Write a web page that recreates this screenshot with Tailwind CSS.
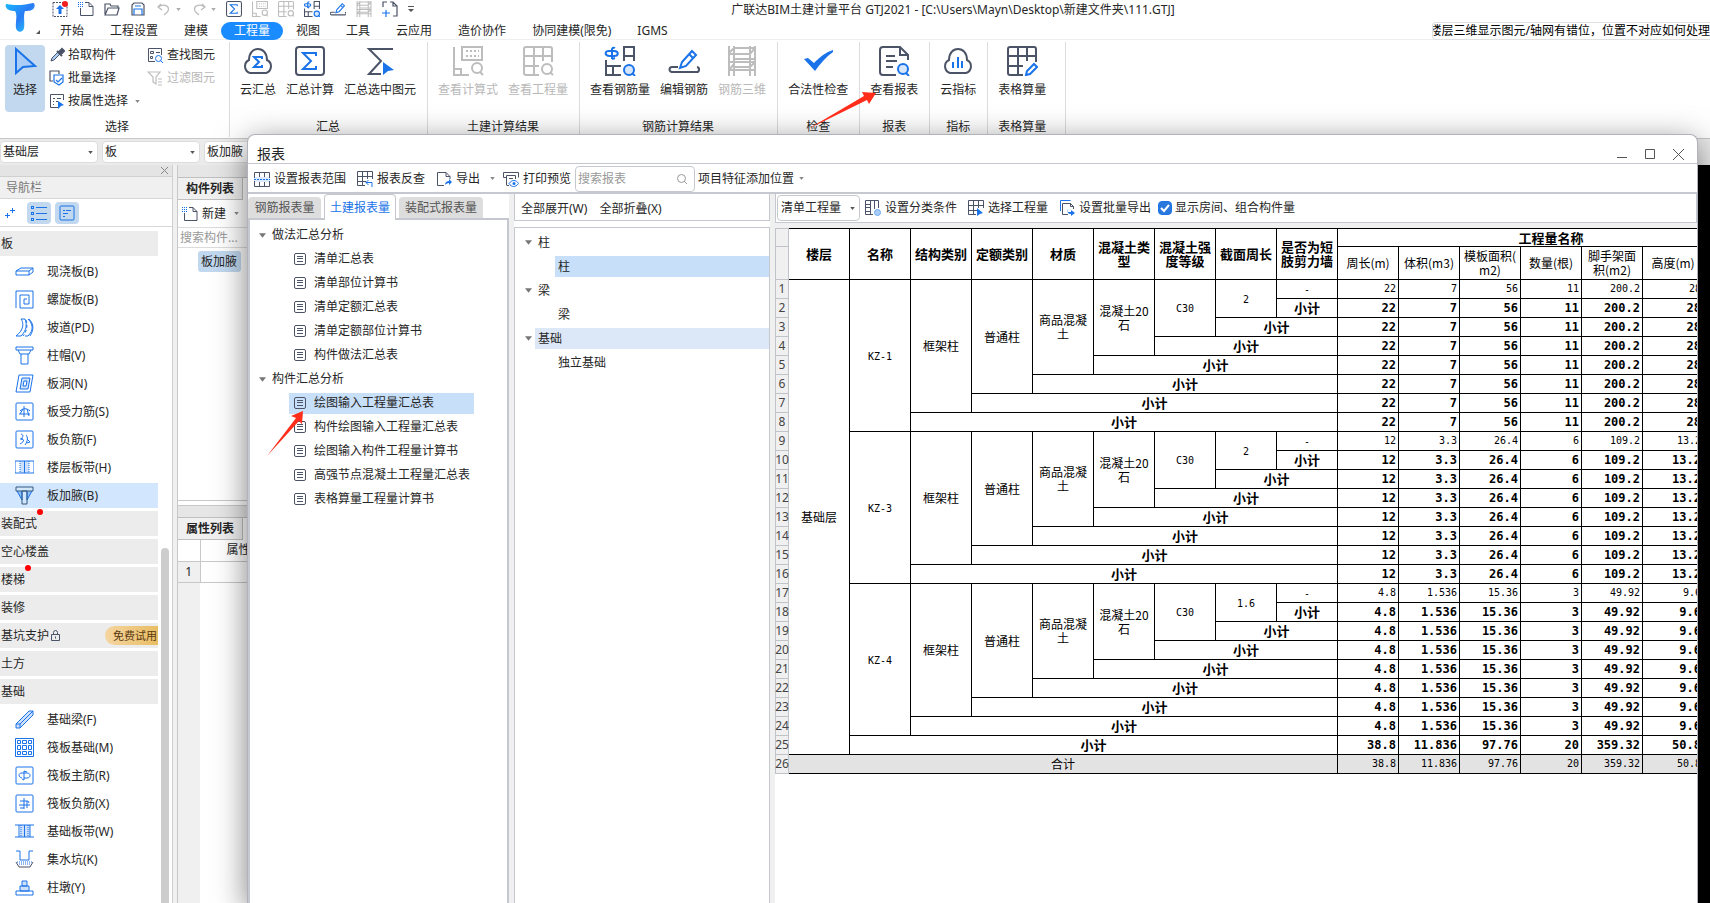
<!DOCTYPE html>
<html lang="zh-CN">
<head>
    <meta charset="UTF-8">
    <meta name="viewport" content="width=device-width, initial-scale=1.0">
    <title>广联达BIM土建计量平台 GTJ2021</title>
    <script src="https://cdn.jsdelivr.net/npm/@tailwindcss/browser@4"></script>
</head>
<body class="relative h-screen overflow-hidden bg-white font-['Noto_Sans','Noto_Sans_CJK_SC',sans-serif] text-[12px] leading-5 text-[#262626]">

    <!-- Iconos -->
    <svg class="absolute size-0">
        <defs>
            <linearGradient id="logoG" x1="0" y1="0" x2="1" y2="1">
                <stop offset="0" stop-color="#16b9ff"/><stop offset="0.5" stop-color="#2b7bf5"/><stop offset="1" stop-color="#22d3fb"/>
            </linearGradient>
        </defs>
        <symbol id="caret" viewBox="0 0 6 4"><path d="M0 0h6L3 4z" fill="currentColor"/></symbol>
        <symbol id="sum" viewBox="0 0 30 30" fill="none" stroke-width="2"><rect x="1" y="1" width="28" height="28" rx="3" stroke="#4b5366"/><path d="M21 10V7H8l8 8-8 8h13v-3" stroke="#1a73e8"/></symbol>
        <symbol id="cloudsum" viewBox="0 0 32 30" fill="none" stroke-width="2"><path d="M8 27a7 7 0 0 1-1-13C7 7 11 3 16 3s9 4 9 11a7 7 0 0 1-1 13z" stroke="#4b5366"/><path d="M20 13v-2h-8l5 5-5 5h8v-2" stroke="#1a73e8"/></symbol>
        <symbol id="sumsel" viewBox="0 0 30 30"><path d="M28 3H4l12 12L4 28h12" fill="none" stroke="#4b5366" stroke-width="2"/><path d="M18 16l11 8-6 1-5 4z" fill="#1a73e8"/></symbol>
        <symbol id="calc" viewBox="0 0 30 30" fill="none" stroke="#bdbdbd" stroke-width="2"><path d="M1 1v28h15M1 23h7v6M9 1h20v13H9z"/><path d="M13 5h13M13 10h13" stroke-dasharray="2 2"/><circle cx="24" cy="22" r="5"/><path d="M27 26l3 3"/></symbol>
        <symbol id="grid" viewBox="0 0 30 30" fill="none" stroke="#bdbdbd" stroke-width="2"><path d="M16 29H3a2 2 0 0 1-2-2V3a2 2 0 0 1 2-2h24a2 2 0 0 1 2 2v13M1 10h28M1 20h15M11 1v28M20 1v14"/><circle cx="24" cy="23" r="5"/><path d="M27 26l3 3"/></symbol>
        <symbol id="rebar" viewBox="0 0 30 30" fill="none" stroke-width="2"><path d="M19 15V1h10v14M19 10h10M1 14v15h15M1 20h15M8 20v9" stroke="#4b5366"/><g stroke="#1a73e8"><path d="M7 13V3a2 2 0 0 1 3-1M4 10c-5-1-4-5 0-5h5c5 0 5 5 0 5H4M7 13l3-1"/><circle cx="24" cy="24" r="5" fill="#d6e6fb"/><path d="M27 27l3 3"/></g></symbol>
        <symbol id="edit" viewBox="0 0 30 30" fill="none" stroke-width="2"><path d="M9 21H3a2 2 0 0 0 0 5h24a2 2 0 0 0 1-5" stroke="#4b5366"/><path d="M11 22l2-6L23 5l4 4-10 11zM20 8l4 4" stroke="#1a73e8"/></symbol>
        <symbol id="cage" viewBox="0 0 30 30" fill="none" stroke="#bdbdbd" stroke-width="2"><path d="M2 0v30M7 0v30M23 0v30M28 0v30M2 7L7 2h21M2 8h21l5-6M2 16h26M7 13h21M2 24h26M7 21h16l5-5M2 24l5-6"/></symbol>
        <symbol id="check" viewBox="0 0 30 30"><path d="M1 13l4-1 6 5C17 11 23 6 30 4v2C23 11 17 18 12 25z" fill="#1a73e8"/></symbol>
        <symbol id="report" viewBox="0 0 30 30" fill="none" stroke-width="2"><path d="M17 29H4a3 3 0 0 1-3-3V4a3 3 0 0 1 3-3h17l8 8v5M21 1v8h8M7 10h9M7 15h11M7 21h7" stroke="#4b5366"/><g stroke="#1a73e8"><circle cx="24" cy="23" r="5" fill="#d6e6fb"/><path d="M27 27l3 3"/></g></symbol>
        <symbol id="cloudbar" viewBox="0 0 32 30" fill="none" stroke-width="2"><path d="M8 27a7 7 0 0 1-1-13C7 7 11 3 16 3s9 4 9 11a7 7 0 0 1-1 13z" stroke="#4b5366"/><path d="M11 22v-6M16 22V11M20 22v-7" stroke="#1a73e8"/></symbol>
        <symbol id="tablepen" viewBox="0 0 30 30" fill="none" stroke-width="2"><path d="M16 29H3a2 2 0 0 1-2-2V3a2 2 0 0 1 2-2h24a2 2 0 0 1 2 2v13M1 10h28M1 20h15M11 1v28M20 1v14" stroke="#4b5366"/><path d="M19 29l1-4 7-7 3 3-7 7z" stroke="#1a73e8"/></symbol>
        <symbol id="cursor" viewBox="0 0 30 30"><path d="M6 3v24l7-6 12-1z" fill="#a9cdf7" stroke="#1a73e8" stroke-width="2"/></symbol>
        <symbol id="newdoc" viewBox="0 0 16 16" fill="none"><path d="M7 1.500h4l4 4v9H2.500V7M11 1.500v4h4" stroke="#4b5366"/><path d="M0 1.500h5M0 3.500h5M0 5.500h5" stroke="#1a73e8" stroke-dasharray="1 1"/></symbol>
        <symbol id="doc" viewBox="0 0 12 12" fill="none" stroke="#4b5366"><rect x="0.5" y="0.5" width="11" height="11" rx="1.5"/><path d="M3 3.500h6M3 5.500h6M3 8.500h6"/></symbol>
        <symbol id="tgrid" viewBox="0 0 16 16" fill="none" stroke="#4b5366"><path d="M8 14.500H.5V.5h15V8M.5 5.500h15M.5 10.500H9M5.500.5V15M10.500.5V8"/></symbol>
    </svg>

    <div class="flex h-full flex-col">
        <!-- Cabecera -->
        <header class="flex h-10 shrink-0 border-b border-[#efefef]">
            <div class="relative w-[47px] shrink-0">
                <svg class="ml-[5px] mt-[3px] h-[29px] w-[30px]" viewBox="0 0 30 29"><path d="M2 1C10 3 20 2 28 0c2 0 2 3 1 5-2 3-6 3-9 3-2 5 0 12-1 17-1 5-7 5-8 0-1-6 2-12-1-17C6 8 2 7 1 4 0 2 1 1 2 1z" fill="url(#logoG)"/></svg>
                <svg class="absolute bottom-[5px] right-[7px] size-1" viewBox="0 0 4 4"><path d="M4 0v4H0z" fill="#555"/></svg>
            </div>
            <div class="min-w-0 flex-1">
                <div class="flex h-[22px] items-start">
                    <div class="ml-[5px] flex gap-[10px] pt-px text-[#555]">
                        <button aria-label="上传"><svg class="size-4" viewBox="0 0 16 16" fill="none"><rect x="1" y="1.5" width="14" height="14" stroke="#4b5366" stroke-dasharray="2 1"/><path d="M8 4l4 4H9.500v5h-3V8H4z" fill="#1a73e8"/><circle cx="13" cy="3" r="3" fill="#f02020"/></svg></button>
                        <button aria-label="新建"><svg class="size-4"><use href="#newdoc"/></svg></button>
                        <button aria-label="打开"><svg class="size-4" viewBox="0 0 16 16" fill="none" stroke="#4b5366" stroke-width="1.2"><path d="M1 13V3h5l1 2h7v2M1 14l3-7h11l-2 7z"/></svg></button>
                        <button aria-label="保存"><svg class="size-4" viewBox="0 0 16 16" fill="none" stroke-width="1.2"><path d="M2 14V4l2-2h8l2 2v10z" stroke="#4b5366"/><path d="M4 14V8h8v6M5 5h6" stroke="#1a73e8"/></svg></button>
                        <button aria-label="撤销" class="flex w-[25px] items-center gap-1 text-[#aaa]"><svg class="size-4" viewBox="0 0 16 16" fill="none" stroke="#bbb" stroke-width="1.3"><path d="M5 3L2 6l4 3M2 6c6-4 12-1 10 4-1 2-3 3-4 4"/></svg><svg class="h-[3px] w-[5px]"><use href="#caret"/></svg></button>
                        <button aria-label="重做" class="flex w-[25px] items-center gap-1 text-[#aaa]"><svg class="size-4" viewBox="0 0 16 16" fill="none" stroke="#bbb" stroke-width="1.3"><path d="M11 3l3 3-4 3M14 6C8 2 2 5 4 10c1 2 3 3 4 4"/></svg><svg class="h-[3px] w-[5px]"><use href="#caret"/></svg></button>
                        <button aria-label="汇总计算"><svg class="size-4"><use href="#sum"/></svg></button>
                        <button aria-label="查看计算式"><svg class="size-4"><use href="#calc"/></svg></button>
                        <button aria-label="查看工程量"><svg class="size-4"><use href="#grid"/></svg></button>
                        <button aria-label="查看钢筋量"><svg class="size-4"><use href="#rebar"/></svg></button>
                        <button aria-label="编辑钢筋"><svg class="size-4"><use href="#edit"/></svg></button>
                        <button aria-label="钢筋三维"><svg class="size-4"><use href="#cage"/></svg></button>
                        <button aria-label="添加"><svg class="size-4" viewBox="0 0 16 16" fill="none" stroke-width="1.2"><path d="M1 6V1h4M8 1h3l4 4v10h-4M11 1v4h4" stroke="#4b5366"/><path d="M4 9v7M0 12h8" stroke="#1a73e8"/></svg></button>
                        <button aria-label="更多" class="flex items-center"><svg class="h-[7px] w-[6px]" viewBox="0 0 6 7"><path d="M0 0h6v1H0zM0 3h6L3 6z" fill="#555"/></svg></button>
                    </div>
                    <h1 class="min-w-0 flex-1 truncate pr-[218px] text-center">广联达BIM土建计量平台 GTJ2021 - [C:\Users\Mayn\Desktop\新建文件夹\111.GTJ]</h1>
                </div>
                <nav class="flex h-[18px] items-center leading-[18px]">
                    <a href="#" class="px-[13px]">开始</a>
                    <a href="#" class="px-[13px]">工程设置</a>
                    <a href="#" class="px-[13px]">建模</a>
                    <a href="#" class="rounded-full bg-[#1a8cff] px-[13px] text-white">工程量</a>
                    <a href="#" class="px-[13px]">视图</a>
                    <a href="#" class="px-[13px]">工具</a>
                    <a href="#" class="px-[13px]">云应用</a>
                    <a href="#" class="px-[13px]">造价协作</a>
                    <a href="#" class="px-[13px]">协同建模(限免)</a>
                    <a href="#" class="px-[13px]">IGMS</a>
                    <div class="ml-auto flex w-[278px] justify-end overflow-hidden whitespace-nowrap rounded-l-sm border border-r-0 border-[#e0e0e0] leading-4 text-black">楼层三维显示图元/轴网有错位，位置不对应如何处理</div>
                </nav>
            </div>
        </header>

        <!-- Cinta -->
        <section class="flex h-[99px] shrink-0 border-b border-[#c8c8c8] pb-px pt-0.5">
            <div class="flex w-[230px] flex-col border-r border-[#dcdcdc] pl-[5px] pt-[3px]">
                <div class="flex">
                    <button class="flex h-[67px] w-10 flex-col items-center rounded-sm bg-[#c1d8ef] pt-px"><svg class="size-[30px]"><use href="#cursor"/></svg><span class="mt-1">选择</span></button>
                    <div class="ml-1 flex w-[98px] flex-col gap-[3px]">
                        <button class="flex h-5 items-center gap-[3px]"><svg class="size-4" viewBox="0 0 16 16"><path d="M2 14l1-3 6-6 2 2-6 6z" fill="#a9cdf7" stroke="#4b5366"/><path d="M8 4l5 5M10 5l3-3 2 2-3 3z" stroke="#4b5366" stroke-width="2" fill="#4b5366"/></svg>拾取构件</button>
                        <button class="flex h-5 items-center gap-[3px]"><svg class="size-4" viewBox="0 0 16 16" fill="none" stroke-width="1.2"><path d="M4 11H1V1h9v3" stroke="#4b5366"/><path d="M5 5h9v7l-4 3-5-3z" stroke="#1a73e8"/><path d="M7 10l2 2 4-4" stroke="#1a73e8"/></svg>批量选择</button>
                        <button class="flex h-5 items-center gap-[3px] whitespace-nowrap"><svg class="size-4 shrink-0" viewBox="0 0 16 16" fill="none"><path d="M9 14.500H1.500v-13h13V7M4 5.500h2M8 5.500h4M4 8.500h1M7 8.500h2M4 11.500h1" stroke="#4b5366"/><path d="M9 8l6 4-3 1-3 3z" fill="#1a73e8"/></svg>按属性选择<svg class="ml-1 h-[3px] w-[5px] shrink-0 text-[#888]"><use href="#caret"/></svg></button>
                    </div>
                    <div class="flex flex-col gap-[3px]">
                        <button class="flex h-5 items-center gap-1"><svg class="size-4" viewBox="0 0 16 16" fill="none"><path d="M8 14.500H1.500v-13h13V8M3.500 4.500h3v2h-3zM9 5.500h4M3.500 9.500h2v2h-2z" stroke="#4b5366"/><circle cx="11.500" cy="11.500" r="3" stroke="#1a73e8"/><path d="M13.500 13.500L16 16" stroke="#1a73e8"/></svg>查找图元</button>
                        <button disabled class="flex h-5 items-center gap-1 text-[#b8b8b8]"><svg class="size-4" viewBox="0 0 16 16" fill="none" stroke="#bdbdbd" stroke-width="1.2"><path d="M1 2h12L9 7v7l-3-2V7zM11 9h4M11 12h4M11 15h4"/></svg>过滤图元</button>
                    </div>
                </div>
                <div class="mt-auto text-center">选择</div>
            </div>
            <div id="ribbon" class="flex"></div>
        </section>

        <!-- Selectores -->
        <section class="flex h-[26px] shrink-0 gap-1 bg-[#ebebeb] pt-0.5">
            <div class="relative flex h-[22px] w-[98px] items-center rounded border border-[#dcdcdc] bg-white">
                <select aria-label="楼层" class="w-full appearance-none pl-[2px] leading-5"><option>基础层</option></select>
                <svg class="pointer-events-none absolute right-1 h-[3px] w-[5px] text-[#555]"><use href="#caret"/></svg>
            </div>
            <div class="relative flex h-[22px] w-[98px] items-center rounded border border-[#dcdcdc] bg-white">
                <select aria-label="构件类型" class="w-full appearance-none pl-[2px] leading-5"><option>板</option></select>
                <svg class="pointer-events-none absolute right-1 h-[3px] w-[5px] text-[#555]"><use href="#caret"/></svg>
            </div>
            <div class="flex h-[22px] w-[98px] items-center rounded border border-[#dcdcdc] bg-white">
                <select aria-label="构件" class="w-full appearance-none pl-[2px] leading-5"><option>板加腋</option></select>
            </div>
        </section>

        <main class="flex min-h-0 flex-1 bg-[#f0f0f0]">
            <aside class="flex w-[173px] shrink-0 flex-col border-r border-[#cfcfcf] bg-white">
                <div class="flex h-3 items-center justify-end border-b border-[#d0d0d0] bg-[#e4e4e4] pr-1"><button aria-label="关闭"><svg class="size-[7px]" viewBox="0 0 7 7" stroke="#888"><path d="M0 0l7 7M7 0L0 7"/></svg></button></div>
                <h2 class="h-[22px] border-b border-[#d8d8d8] bg-[#f0f0f0] pl-1.5 leading-[22px] text-[#777]">导航栏</h2>
                <div class="flex h-7 items-center gap-1 border-b border-[#d8d8d8] pl-1 text-[#1a73e8]">
                    <button aria-label="添加" class="mr-1 flex size-[14px] items-center"><svg class="size-3" viewBox="0 0 12 12" stroke="currentColor"><path d="M8.500 1v5M6 3.500h5M3.500 6v5M1 8.500h5"/></svg></button>
                    <button aria-label="列表" class="ml-px flex h-[22px] w-6 items-center justify-center rounded-sm bg-[#c1d8ef]"><svg class="size-4" viewBox="0 0 16 16" fill="none" stroke="currentColor"><path d="M5 2.500h11M5 8.500h11M5 14.500h11"/><rect x="0.500" y="1.500" width="2" height="2"/><rect x="0.500" y="7.500" width="2" height="2"/><rect x="0.500" y="13.500" width="2" height="2"/></svg></button>
                    <button aria-label="详情" class="flex h-[22px] w-6 items-center justify-center rounded-sm bg-[#c1d8ef]"><svg class="size-4" viewBox="0 0 16 16" fill="none" stroke="currentColor"><rect x="1" y="1" width="14" height="14" rx="1"/><path d="M4 5.500h2M7 5.500h5M4 8.500h5M4 11.500h2"/></svg></button>
                </div>
                <div class="flex min-h-0 flex-1 overflow-hidden pt-1">
                    <ul id="nav" class="flex w-[158px] flex-col gap-[3px]"></ul>
                    <div class="ml-[3px] mt-[317px] w-2 rounded-t-full bg-[#cdcdcd]"></div>
                </div>
            </aside>

            <div class="ml-1 flex w-[120px] shrink-0 flex-col border-l border-[#c8c8c8] bg-white">
                <section class="flex h-[336px] flex-col border-b border-[#c8c8c8]">
                    <div class="h-[13px] shrink-0 border-b border-[#c0c0c0] bg-[#e6e6e6]"></div>
                    <h2 class="h-[22px] w-[65px] border-b border-r border-[#c0c0c0] bg-[#f0f0f0] text-center font-semibold leading-[22px]">构件列表</h2>
                    <button class="flex h-7 items-center gap-1 border-b border-[#dcdcdc] pl-1"><svg class="size-4"><use href="#newdoc"/></svg>新建<svg class="ml-1 h-[3px] w-[5px] text-[#888]"><use href="#caret"/></svg></button>
                    <input aria-label="搜索构件" placeholder="搜索构件..." class="h-5 border-b border-[#dcdcdc] pl-[2px] placeholder:text-[#999]">
                    <div class="ml-5 mt-[3px] w-[43px] rounded-[3px] bg-[#c1d8ef] pl-[3px] leading-[21px]">板加腋</div>
                </section>
                <section class="mt-1 flex min-h-0 flex-1 flex-col border-t border-[#c8c8c8]">
                    <div class="h-3 shrink-0 border-b border-[#c0c0c0] bg-[#e6e6e6]"></div>
                    <h2 class="h-[22px] w-[65px] shrink-0 border-b border-r border-[#c0c0c0] bg-[#f0f0f0] text-center font-semibold leading-[22px]">属性列表</h2>
                    <table class="w-full table-fixed">
                        <tr class="h-[21px] border-b border-[#c8c8c8]"><th class="w-[22px] border-r border-[#c8c8c8]"></th><th class="pl-[26px] text-left font-normal">属性名称</th></tr>
                        <tr class="h-[21px] border-b border-[#c8c8c8]"><td class="border-r border-[#c8c8c8] bg-[#f0f0f0] text-center">1</td><td></td></tr>
                    </table>
                    <div class="w-[22px] flex-1 bg-[#f0f0f0]"></div>
                </section>
            </div>
            <div class="flex-1 bg-black"></div>
        </main>
    </div>

    <!-- Ventana de informes -->
    <div class="absolute bottom-0 left-[247px] right-[12px] top-[134px] flex flex-col overflow-hidden rounded-t-lg border border-b-0 border-[#b0b4ba] bg-white shadow-[0_8px_32px_rgba(0,0,0,0.5)]">
        <div class="flex h-7 shrink-0 items-center pl-[9px] pr-[13px] pt-2.5">
            <h2 class="text-[14px]">报表</h2>
            <div class="ml-auto flex items-center gap-[18px] text-[#555]">
                <button aria-label="最小化"><svg class="block size-[10px]" viewBox="0 0 10 10" stroke="currentColor"><path d="M0 8.500h10"/></svg></button>
                <button aria-label="最大化"><svg class="block size-[10px]" viewBox="0 0 10 10" fill="none" stroke="currentColor"><path d="M.5.5h9v9h-9z"/></svg></button>
                <button aria-label="关闭"><svg class="block size-[11px]" viewBox="0 0 11 11" fill="none" stroke="currentColor"><path d="M0 0l11 11M11 0L0 11"/></svg></button>
            </div>
        </div>
        <div class="flex h-[31px] shrink-0 items-center whitespace-nowrap border-b-2 border-t border-[#c5c9cf] pl-1.5 pt-px">
            <button class="flex items-center gap-1"><svg class="size-4" viewBox="0 0 16 16" fill="none"><path d="M.5 7V1.500h15V7M5.500 1v5M10.500 1v5M.5 10v5.500h15V10M5.500 11v4M10.500 11v4" stroke="#4b5366"/><path d="M0 8.500h16" stroke="#1a73e8" stroke-dasharray="2 1"/><path d="M0 6h16v5H0z" fill="#1a73e8" fill-opacity=".15"/></svg>设置报表范围</button>
            <button class="ml-[11px] flex items-center gap-1"><svg class="size-4"><use href="#tgrid"/><path d="M9 11.500h6V16M11.500 9L9 11.500l2.500 2.500" fill="none" stroke="#1a73e8"/></svg>报表反查</button>
            <button class="ml-[11px] flex items-center gap-1"><svg class="size-4" viewBox="0 0 16 16" fill="none"><path d="M8 14.500H1.500v-13H10l4 4V8M10 1.500v4h4" stroke="#4b5366"/><path d="M9 14c0-3 2-4 4-4V8l3 3-3 3v-2c-2 0-3 1-4 2z" fill="#1a73e8"/></svg>导出<svg class="ml-1.5 h-[3px] w-[5px] text-[#888]"><use href="#caret"/></svg></button>
            <button class="ml-2 flex items-center gap-1"><svg class="size-4" viewBox="0 0 16 16" fill="none"><path d="M3 6.500H.5v-5h15v5M3.500 14V4.500h9V8M3.500 14.500H6M6 7.500h4" stroke="#4b5366"/><path d="M6 12.500c3-4 7-4 9.500 0-3 4-7 4-9.500 0z" stroke="#1a73e8"/><circle cx="11" cy="12.500" r="1.500" fill="#1a73e8"/></svg>打印预览</button>
            <div class="ml-1 flex h-[26px] w-[120px] items-center rounded border border-[#c5c9cf] pl-[2px] pr-1.5">
                <input aria-label="搜索报表" placeholder="搜索报表" class="min-w-0 flex-1 placeholder:text-[#999]">
                <svg class="size-3 shrink-0" viewBox="0 0 12 12" fill="none" stroke="#999"><circle cx="5.500" cy="5.500" r="4"/><path d="M8 8l3 3"/></svg>
            </div>
            <button class="ml-[3px] flex items-center">项目特征添加位置<svg class="ml-[5px] h-[3px] w-[5px] text-[#888]"><use href="#caret"/></svg></button>
        </div>

        <div class="flex min-h-0 flex-1 bg-[#f0f0f0]">
            <div class="flex w-[261px] shrink-0 flex-col">
                <div class="flex h-6 items-end gap-[3px] bg-white">
                    <button class="h-[21px] w-[73px] rounded-t bg-[#dddddd] text-[#555]">钢筋报表量</button>
                    <button class="z-10 -mb-[2px] h-[26px] w-[72px] rounded-t border border-b-0 border-[#c5c9cf] bg-white text-[#1a73e8]">土建报表量</button>
                    <button class="h-[21px] w-[84px] rounded-t bg-[#dddddd] text-[#555]">装配式报表量</button>
                </div>
                <ul id="reportTree" class="flex-1 border-2 border-b-0 border-[#c5c9cf] bg-white pt-[3px]"></ul>
            </div>
            <div class="ml-[5px] flex w-[256px] shrink-0 flex-col bg-white">
                <div class="mb-1.5 flex h-[27px] items-center gap-3 border border-t-0 border-[#c5c9cf] pl-1.5 pt-1">
                    <button>全部展开(W)</button><button>全部折叠(X)</button>
                </div>
                <ul id="partTree" class="flex-1 border border-b-0 border-[#c5c9cf] pt-[2px]"></ul>
            </div>
            <div class="ml-[5px] flex min-w-0 flex-1 flex-col">
                <div class="flex h-[29px] shrink-0 items-center whitespace-nowrap border border-t-0 border-[#c5c9cf] bg-white pl-px">
                    <div class="relative flex h-[26px] w-[83px] items-center rounded border border-[#c5c9cf]">
                        <select aria-label="工程量类型" class="w-full appearance-none pl-[3px] leading-5"><option>清单工程量</option></select>
                        <svg class="pointer-events-none absolute right-1 h-[3px] w-[5px] text-[#555]"><use href="#caret"/></svg>
                    </div>
                    <button class="ml-[5px] flex items-center gap-1"><svg class="size-4" viewBox="0 0 16 16" fill="none"><path d="M8 14.500H.5V.5h13V8M5.500.5v14M.5 4.500h5M.5 7.500h5M.5 11.500h5M9.500.5V9" stroke="#4b5366"/><circle cx="12.500" cy="12.500" r="3" fill="#a9cdf7" stroke="#6fa8ee"/></svg>设置分类条件</button>
                    <button class="ml-[11px] flex items-center gap-1"><svg class="size-4"><use href="#tgrid"/><path d="M9 8l6 5-3 1-3 2z" fill="#1a73e8"/></svg>选择工程量</button>
                    <button class="ml-[11px] flex items-center gap-1"><svg class="size-4" viewBox="0 0 16 16" fill="none"><path d="M1.500 11V.5h10" stroke="#1a73e8"/><path d="M9 14.500H3.500v-11h8l3 3V9M11.500 3.500v3h3" stroke="#4b5366"/><path d="M9 9v3h3v-2l4 3-4 3v-2c-3 0-4-2-3-5z" fill="#1a73e8"/></svg>设置批量导出</button>
                    <label class="ml-[7px] flex items-center gap-[3px]"><span class="relative flex"><input type="checkbox" checked class="size-[14px] appearance-none rounded-sm border border-[#1a73e8] checked:bg-[#2b78dd]"><svg class="pointer-events-none absolute inset-0 size-[14px]" viewBox="0 0 14 14" fill="none" stroke="#fff" stroke-width="2"><path d="M3 7l3 3 5-6"/></svg></span>显示房间、组合构件量</label>
                </div>
                <div class="mt-[5px] min-h-0 flex-1 overflow-hidden bg-white">
                    <table class="w-[990px] table-fixed border-separate border-spacing-0 font-['Noto_Sans_CJK_SC',sans-serif] leading-[14px] text-black">
                        <colgroup><col class="w-[14px]"><col span="16" class="w-[61px]"></colgroup>
                        <thead id="tablaHead"></thead>
                        <tbody id="tablaBody"></tbody>
                    </table>
                </div>
            </div>
        </div>
    </div>

    <!-- Flechas rojas -->
    <svg class="pointer-events-none absolute left-[800px] top-[88px] h-11 w-20" viewBox="0 0 80 44"><path d="M8 41L64 8l-2-4 14 1-7 11-2-4z" fill="#ff2d1a"/></svg>
    <svg class="pointer-events-none absolute left-[264px] top-[408px] h-[50px] w-11" viewBox="0 0 44 50"><path d="M3 48L32 10l-5-2 12-5-1 13-3-3z" fill="#ff2d1a"/></svg>

    <script>
        // Cinta: [grupo, [texto, icono, desactivado]...]
        const grupos = [
            ["汇总", ["云汇总", "cloudsum"], ["汇总计算", "sum"], ["汇总选中图元", "sumsel"]],
            ["土建计算结果", ["查看计算式", "calc", 1], ["查看工程量", "grid", 1]],
            ["钢筋计算结果", ["查看钢筋量", "rebar"], ["编辑钢筋", "edit"], ["钢筋三维", "cage", 1]],
            ["检查", ["合法性检查", "check"]],
            ["报表", ["查看报表", "report"]],
            ["指标", ["云指标", "cloudbar"]],
            ["表格算量", ["表格算量", "tablepen"]]
        ];
        document.getElementById("ribbon").innerHTML = grupos.map(([nombre, ...botones], i) => `
            <div class="flex flex-col border-r border-[#dcdcdc] pl-[10px] pt-1 ${i == 6 ? "pr-[19px]" : "pr-[11px]"}">
                <div class="flex gap-[10px]">${botones.map(([t, ico, off]) => `
                    <button ${off ? "disabled" : ""} class="flex flex-col items-center whitespace-nowrap ${off ? "text-[#b8b8b8]" : ""}"><svg class="h-[30px] w-8"><use href="#${ico}"/></svg><span class="mt-1">${t}</span></button>`).join("")}
                </div>
                <div class="mt-auto text-center">${nombre}</div>
            </div>`).join("");

        // Panel de navegación
        const marco = '<rect x="1" y="1" width="17" height="17" rx="1"/>';
        const nav = [
            ["板"],
            ["现浇板(B)", '<path d="M1 9l5-3h12v4l-4 3H1zM1 9h13v4M14 9l4-3"/>'],
            ["螺旋板(B)", '<path d="M1 18V1h17v17H5V5h9v9H9V9h3"/>'],
            ["坡道(PD)", '<path d="M6 1c3 4 3 11-5 17h5c6-6 6-12 4-17zM13 1c5 5 6 11 0 17h-3M14 1c5 5 5 11 1 17"/><path d="M11 2c2 5 1 11-3 16" stroke-dasharray="3 2"/>'],
            ["柱帽(V)", '<path d="M1 1h17v3H1zM3 4l2 4h9l2-4M6 8v10h7V8"/>'],
            ["板洞(N)", '<path d="M4 1h14l-3 17H1z"/><path d="M7 4h8l-2 11H5z" fill="#cfe1fa"/><path d="M9 7h3l-1 5H8z" fill="#fff"/>'],
            ["板受力筋(S)", marco + '<path d="M9 4v11M5 9c3-3 7-3 10 0M4 12h11M5 12l3-5M12 7l2 7"/>'],
            ["板负筋(F)", marco + '<path d="M6 4c3 1 2 3 0 5 4 0 3 3-1 5M11 5c2 2 2 6-1 10M12 9l3 3-3 1M5 9h3"/>'],
            ["楼层板带(H)", '<path d="M5 3h9v12H5z" fill="#cfe1fa" stroke="none"/><path d="M0 3h19v12H0zM9.500 3v12"/><path d="M5 3v12M14 3v12" stroke-dasharray="1 1"/>'],
            ["板加腋(B)", '<path d="M2 5l5 9V5M17 5l-5 9V5" fill="#8fbdf5"/><path d="M1 1h17v4H1zM7 5h5v13H7z" stroke="#35597f"/>'],
            ["装配式", "", "punto"], ["空心楼盖"], ["楼梯", "", "punto"], ["装修"], ["基坑支护", "", "prueba"], ["土方"], ["基础"],
            ["基础梁(F)", '<path d="M1 14L14 1h4v4L5 18H1z" fill="#cfe1fa"/><path d="M1 14h4v4M5 14L18 1"/>'],
            ["筏板基础(M)", '<path d="M.5.5h18v18H.5zM2.500 2.500h3v3h-3zM7.500 2.500h4v3h-4zM13.500 2.500h3v3h-3zM2.500 7.500h3v4h-3zM7.500 7.500h4v4h-4zM13.500 7.500h3v4h-3zM2.500 13.500h3v3h-3zM7.500 13.500h4v3h-4zM13.500 13.500h3v3h-3z"/>'],
            ["筏板主筋(R)", marco + '<path d="M9 14V5M9 5l3 1M9 14l-2-1M7 12c-4-1-4-5 0-5h5c4 0 4 5 0 5H9"/>'],
            ["筏板负筋(X)", marco + '<path d="M9 4v11M5 7h8l1 2M4 11h11M12 7v7M5 14h4"/>'],
            ["基础板带(W)", '<path d="M5 3h10v12H5z" fill="#cfe1fa" stroke="none"/><path d="M0 3h19M0 15h19M9.500 3v12M15 3v12M4 3v12"/><path d="M6 3v12M13 3v12" stroke-dasharray="1 1"/>'],
            ["集水坑(K)", '<path d="M1 1h4v9h9V1h4"/><path d="M1 12l3 5h11l3-5" stroke="#4b5366"/><path d="M2 12h15M4 14h12" stroke-dasharray="1 1"/>'],
            ["柱墩(Y)", '<path d="M7 3h5v5H7zM5 8h9v5H5z" fill="#cfe1fa"/><path d="M1 13h17v4H1z"/>']
        ];
        document.getElementById("nav").innerHTML = nav.map(([t, ico, extra]) => ico
            ? `<li class="flex h-[25px] shrink-0 items-center gap-[13px] pl-[15px] ${t == "板加腋(B)" ? "bg-[#d2e6fe]" : ""}"><svg class="size-[19px]" viewBox="0 0 19 19" fill="none" stroke="#1a73e8">${ico}</svg>${t}</li>`
            : `<li class="flex h-[25px] shrink-0 items-center bg-[#ececec] pl-px"><span class="relative">${t}${extra == "punto" ? '<i class="absolute -right-1.5 -top-[5px] size-1.5 rounded-full bg-[#ff0000]"></i>' : ""}</span>${extra == "prueba" ? '<svg class="ml-0.5 h-[11px] w-[9px]" viewBox="0 0 9 11" fill="none" stroke="#4b5366"><path d="M.5 4.500h8v6h-8zM2.500 4.500V2.500a2 2 0 0 1 4 0v2M4.500 6.500v2"/></svg><button class="ml-auto rounded-l-full bg-linear-to-r from-[#f5d5a0] to-[#e9bd62] pl-2 pr-px leading-[19px] text-[#5a3a10] text-[11px]">免费试用</button>' : ""}</li>`
        ).join("");

        // Árboles
        const flecha = '<svg class="h-[5px] w-[7px] shrink-0 text-[#777]"><use href="#caret"/></svg>';
        const hoja = '<svg class="size-3 shrink-0"><use href="#doc"/></svg>';
        const informes = [
            ["做法汇总分析", "清单汇总表", "清单部位计算书", "清单定额汇总表", "清单定额部位计算书", "构件做法汇总表"],
            ["构件汇总分析", "绘图输入工程量汇总表", "构件绘图输入工程量汇总表", "绘图输入构件工程量计算书", "高强节点混凝土工程量汇总表", "表格算量工程量计算书"]
        ];
        document.getElementById("reportTree").innerHTML = informes.map(([g, ...hijos]) => `
            <li><div class="flex h-6 items-center gap-1.5 pl-[9px]">${flecha}${g}</div>
                <ul>${hijos.map(h => `<li class="flex h-6 items-center pl-[39px]"><div class="flex h-[21px] w-[185px] items-center gap-2 pl-[5px] ${h == "绘图输入工程量汇总表" ? "bg-[#c7dff9]" : ""}">${hoja}${h}</div></li>`).join("")}</ul>
            </li>`).join("");
        const piezas = [["柱", "柱"], ["梁", "梁"], ["基础", "独立基础"]];
        document.getElementById("partTree").innerHTML = piezas.map(([g, h], i) => `
            <li><div class="flex h-6 items-center gap-[3px] pl-[10px]">${flecha}<span class="h-[21px] flex-1 pl-[3px] leading-[21px] ${i == 2 ? "bg-[#dce8f7]" : ""}">${g}</span></div>
                <div class="flex h-6 items-center pl-10"><span class="h-[21px] flex-1 pl-[3px] leading-[21px] ${i == 0 ? "bg-[#c7dff9]" : ""}">${h}</span></div>
            </li>`).join("");

        // Tabla de cantidades
        const num = n => `<th scope="row" class="h-[19px] whitespace-nowrap border-x border-b border-[#c0c3c8] bg-[#f0f0f0] font-['Noto_Sans'] text-[12px] font-normal text-[#444]"><span class="-mx-1">${n}</span></th>`;
        const celda = (t, filas = 1, cols = 1) => `<td rowspan="${filas}" colspan="${cols}" class="border-b border-r border-black text-center">${t}</td>`;
        const mono = t => `<span class="font-['DejaVu_Sans_Mono',monospace] text-[10px]">${t}</span>`;
        const sub = cols => `<td colspan="${cols}" class="border-b border-r border-black text-center text-[13px] font-bold">小计</td>`;
        const valores = (v, negrita) => [...v, ""].map(x => `<td class="border-b border-r border-black pr-[2px] text-right font-['DejaVu_Sans_Mono',monospace] ${negrita ? "text-[12px] font-bold" : "text-[10px]"}">${x}</td>`).join("");

        const titulos = ["楼层", "名称", "结构类别", "定额类别", "材质", "混凝土类<br>型", "混凝土强<br>度等级", "截面周长", "是否为短<br>肢剪力墙"];
        const medidas = ["周长(m)", "体积(m3)", "模板面积(<br>m2)", "数量(根)", "脚手架面<br>积(m2)", "高度(m)", ""];
        document.getElementById("tablaHead").innerHTML = `
            <tr class="h-[19px]"><td class="border border-[#c0c3c8] bg-[#f0f0f0]"></td>
                ${titulos.map(t => `<th rowspan="2" class="whitespace-nowrap border-y border-r border-black text-[13px] font-bold">${t}</th>`).join("")}
                <th colspan="7" class="border-y border-r border-black text-[13px] font-bold">工程量名称</th></tr>
            <tr class="h-[33px]"><td class="border-x border-b border-[#c0c3c8] bg-[#f0f0f0]"></td>
                ${medidas.map(t => `<th class="whitespace-nowrap border-b border-r border-black font-normal">${t}</th>`).join("")}</tr>`;

        const columnas = [
            ["KZ-1", "2", ["22", "7", "56", "11", "200.2", "28"]],
            ["KZ-3", "2", ["12", "3.3", "26.4", "6", "109.2", "13.2"]],
            ["KZ-4", "1.6", ["4.8", "1.536", "15.36", "3", "49.92", "9.6"]]
        ];
        let filas = "", n = 1;
        columnas.forEach(([nombre, perimetro, v], i) => {
            filas += `<tr>${num(n++)}${i == 0 ? celda("基础层", 25) : ""}${celda(mono(nombre), 8)}${celda("框架柱", 7)}${celda("普通柱", 6)}${celda("商品混凝<br>土", 5)}${celda("混凝土20<br>石", 4)}${celda(mono("C30"), 3)}${celda(mono(perimetro), 2)}${celda(mono("-"))}${valores(v)}</tr>`;
            for (let c = 1; c <= 7; c++) filas += `<tr>${num(n++)}${sub(c)}${valores(v, true)}</tr>`;
        });
        const total = ["38.8", "11.836", "97.76", "20", "359.32", "50.8"];
        filas += `<tr>${num(n++)}${sub(8)}${valores(total, true)}</tr>`;
        filas += `<tr class="bg-[#e3e3e3]">${num(n++)}${celda("合计", 1, 9)}${valores(total)}</tr>`;
        document.getElementById("tablaBody").innerHTML = filas;
    </script>
</body>
</html>
